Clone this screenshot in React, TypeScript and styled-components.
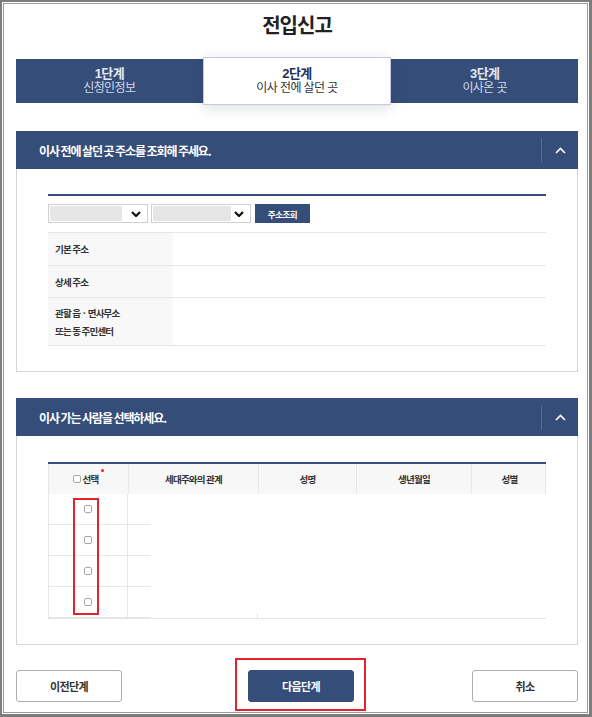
import styled, { createGlobalStyle, css } from 'styled-components'

const navy = '#354d79'
const line = '#e6e6e6'

const GlobalStyle = createGlobalStyle`
  html, body {
    margin: 0;
    padding: 0;
    background: #fff;
  }
  body {
    font-family: 'Noto Sans CJK KR', 'Noto Sans', sans-serif;
    color: #333;
  }
  * {
    box-sizing: border-box;
  }
`

const Frame = styled.div`
  width: 592px;
  height: 717px;
  border-style: solid;
  border-color: #7d7d7d;
  border-width: 2px 3px 3px 2px;
  padding: 1px;
  background: #fff;
`

const Inner = styled.div`
  height: 100%;
  border: 1px solid #9a9a9a;
  padding: 0 9px 0 12px;
`

const Title = styled.h1`
  margin: 0;
  padding-top: 6px;
  font-size: 20px;
  line-height: 30px;
  font-weight: 700;
  text-align: center;
  color: #222;
  letter-spacing: -1px;
`

const Steps = styled.ol`
  margin: 19px 0 0;
  padding: 0;
  list-style: none;
  display: flex;
  height: 44px;
  background: ${navy};
`

const Step = styled.li<{ $active?: boolean }>`
  flex: 1;
  display: flex;
  flex-direction: column;
  align-items: center;
  justify-content: center;
  font-family: 'Liberation Sans', 'Noto Sans CJK KR', sans-serif;
  color: #d3d9e4;
  letter-spacing: -0.6px;

  strong {
    font-size: 13px;
    line-height: 15px;
    color: #e4e8ef;
  }
  span {
    font-size: 12px;
    line-height: 15px;
  }

  ${p => p.$active && css`
    position: relative;
    z-index: 1;
    margin: -2px 0;
    background: #fff;
    border: 1px solid #c6cbd7;
    box-shadow: 0 3px 12px rgba(30, 50, 90, 0.16);

    strong {
      color: #1f3158;
    }
    span {
      color: #333;
    }
  `}
`

const Section = styled.section`
  margin-top: 28px;

  & + & {
    margin-top: 26px;
  }
`

const SectionHeader = styled.header`
  height: 38px;
  display: flex;
  align-items: center;
  padding-left: 23px;
  background: ${navy};

  h2 {
    flex: 1;
    margin: 0;
    font-size: 12px;
    font-weight: 700;
    color: #fff;
    letter-spacing: -1.1px;
  }
`

const Toggle = styled.button`
  width: 37px;
  height: 25px;
  padding: 0;
  border: none;
  border-left: 1px solid #566c96;
  background: transparent;
  display: flex;
  align-items: center;
  justify-content: center;
`

const SectionBody = styled.div<{ $top: number }>`
  border: 1px solid #d6d6d6;
  border-top: none;
  padding: ${p => p.$top}px 31px 25px;
`

const NavyRule = styled.div`
  height: 2px;
  background: ${navy};
`

const SearchRow = styled.div`
  margin-top: 8px;
  display: flex;
  gap: 3px;
`

const Select = styled.div`
  width: 100px;
  height: 19px;
  border: 1px solid #cfcfcf;
  padding: 0 6px 0 1px;
  display: flex;
  align-items: center;
  justify-content: space-between;
`

const SelectFill = styled.span<{ $w: number }>`
  width: ${p => p.$w}px;
  height: 15px;
  background: #e6e6e6;
`

const SearchButton = styled.button`
  margin-left: 1px;
  width: 55px;
  height: 19px;
  border: none;
  background: ${navy};
  color: #fff;
  font-family: inherit;
  font-size: 8.5px;
  font-weight: 700;
  letter-spacing: -0.5px;
  padding: 0;
`

const InfoTable = styled.dl`
  margin: 9px 0 0;
  border-top: 1px solid ${line};
`

const InfoRow = styled.div<{ $h: number }>`
  display: grid;
  grid-template-columns: 125px 1fr;
  height: ${p => p.$h}px;
  border-bottom: 1px solid ${line};

  dt {
    background: #f8f8f8;
    padding-left: 7px;
    display: flex;
    flex-direction: column;
    justify-content: center;
    font-size: 9.5px;
    line-height: 18px;
    font-weight: 700;
    color: #333;
    letter-spacing: -0.8px;
  }
  dd {
    margin: 0;
  }
`

const PersonTable = styled.div`
  border-top: 2px solid ${navy};
`

const HeadRow = styled.div`
  display: grid;
  grid-template-columns: 80px 130px 98px 115px 75px;
  height: 30px;
  background: #f7f7f7;
  border-left: 1px solid ${line};
  border-right: 1px solid ${line};
`

const HeadCell = styled.div`
  display: flex;
  align-items: center;
  justify-content: center;
  gap: 2px;
  border-right: 1px solid ${line};
  font-size: 9.5px;
  font-weight: 700;
  color: #333;
  letter-spacing: -0.8px;

  &:last-child {
    border-right: none;
  }
`

const Required = styled.span`
  position: relative;
  padding-right: 6px;

  &::after {
    content: '';
    position: absolute;
    right: 0;
    top: -3px;
    width: 3px;
    height: 3px;
    border-radius: 50%;
    background: #e0262d;
  }
`

const PersonBody = styled.div`
  position: relative;
  border-left: 1px solid ${line};
  border-bottom: 1px solid ${line};

  &::after {
    content: '';
    position: absolute;
    left: 208px;
    bottom: 0;
    width: 1px;
    height: 4px;
    background: #dedede;
  }
`

const PersonRow = styled.div`
  display: flex;
  height: 31px;

  &:last-child {
    height: 30px;
  }
  &:last-child > * {
    border-bottom: none;
  }
`

const CheckCell = styled.div`
  width: 79px;
  border-right: 1px solid ${line};
  border-bottom: 1px solid ${line};
  display: flex;
  align-items: center;
  justify-content: center;
`

const RowStub = styled.div`
  width: 23px;
  border-bottom: 1px solid ${line};
`

const Box = styled.span`
  display: inline-block;
  width: 8px;
  height: 8px;
  border: 1px solid #a8a8a8;
  border-radius: 2px;
  background: #fff;
`

const Marker = styled.div`
  position: absolute;
  left: 24px;
  top: 4px;
  width: 26px;
  height: 117px;
  border: 2px solid #e3222b;
  pointer-events: none;
`

const Footer = styled.footer`
  margin-top: 25px;
  display: grid;
  grid-template-columns: 1fr auto 1fr;
  align-items: start;
`

const Button = styled.button<{ $primary?: boolean; $end?: boolean }>`
  width: 106px;
  height: 32px;
  border-radius: 3px;
  border: 1px solid ${p => (p.$primary ? navy : '#adadad')};
  background: ${p => (p.$primary ? navy : '#fff')};
  color: ${p => (p.$primary ? '#fff' : '#333')};
  font-family: inherit;
  font-size: 11px;
  font-weight: 700;
  letter-spacing: -0.6px;
  justify-self: ${p => (p.$end ? 'end' : 'start')};
`

const Highlight = styled.div`
  margin: -12px 0 0 7px;
  padding: 10px 10px 7px 11px;
  border: 2px solid #e3222b;
`

const ChevronUp = () => (
  <svg width="11" height="7" viewBox="0 0 11 7">
    <polyline points="1,6 5.5,1.5 10,6" fill="none" stroke="#fff" strokeWidth="1.6" />
  </svg>
)

const ChevronDown = () => (
  <svg width="10" height="6" viewBox="0 0 10 6">
    <polyline points="1,1 5,5 9,1" fill="none" stroke="#111" strokeWidth="2.2" />
  </svg>
)

const columns = ['세대주와의 관계', '성명', '생년월일', '성별']

export default function App() {
  return (
    <>
      <GlobalStyle />
      <Frame>
        <Inner>
          <Title>전입신고</Title>

          <Steps>
            <Step>
              <strong>1단계</strong>
              <span>신청인정보</span>
            </Step>
            <Step $active>
              <strong>2단계</strong>
              <span>이사 전에 살던 곳</span>
            </Step>
            <Step>
              <strong>3단계</strong>
              <span>이사온 곳</span>
            </Step>
          </Steps>

          <Section>
            <SectionHeader>
              <h2>이사 전에 살던 곳 주소를 조회해 주세요.</h2>
              <Toggle aria-label="접기"><ChevronUp /></Toggle>
            </SectionHeader>
            <SectionBody $top={25}>
              <NavyRule />
              <SearchRow>
                <Select>
                  <SelectFill $w={72} />
                  <ChevronDown />
                </Select>
                <Select>
                  <SelectFill $w={78} />
                  <ChevronDown />
                </Select>
                <SearchButton>주소조회</SearchButton>
              </SearchRow>
              <InfoTable>
                <InfoRow $h={33}>
                  <dt>기본 주소</dt>
                  <dd />
                </InfoRow>
                <InfoRow $h={32}>
                  <dt>상세 주소</dt>
                  <dd />
                </InfoRow>
                <InfoRow $h={48}>
                  <dt>
                    <span>관할 읍 · 면사무소</span>
                    <span>또는 동 주민센터</span>
                  </dt>
                  <dd />
                </InfoRow>
              </InfoTable>
            </SectionBody>
          </Section>

          <Section>
            <SectionHeader>
              <h2>이사 가는 사람을 선택하세요.</h2>
              <Toggle aria-label="접기"><ChevronUp /></Toggle>
            </SectionHeader>
            <SectionBody $top={26}>
              <PersonTable>
                <HeadRow>
                  <HeadCell>
                    <Box />
                    <Required>선택</Required>
                  </HeadCell>
                  {columns.map(c => (
                    <HeadCell key={c}>{c}</HeadCell>
                  ))}
                </HeadRow>
                <PersonBody>
                  {[0, 1, 2, 3].map(i => (
                    <PersonRow key={i}>
                      <CheckCell><Box /></CheckCell>
                      <RowStub />
                    </PersonRow>
                  ))}
                  <Marker />
                </PersonBody>
              </PersonTable>
            </SectionBody>
          </Section>

          <Footer>
            <Button>이전단계</Button>
            <Highlight>
              <Button $primary>다음단계</Button>
            </Highlight>
            <Button $end>취소</Button>
          </Footer>
        </Inner>
      </Frame>
    </>
  )
}
